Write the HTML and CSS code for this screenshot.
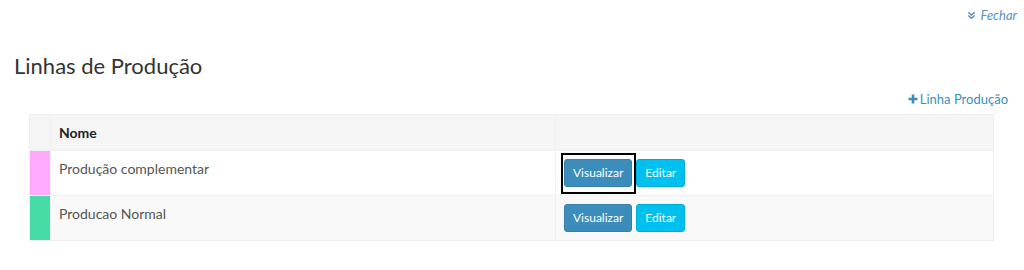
FILE: index.html
```html
<!DOCTYPE html>
<html lang="pt">
<head>
  <meta charset="UTF-8">
  <title>Linhas de Produção</title>
  <link rel="stylesheet" href="styles.css">
</head>
<body>
  <div class="topbar">
    <a class="close-link" href="#">
      <svg class="chev" viewBox="0 0 10 10" width="9" height="9"><path d="M1.5 1.5 L5 4.5 L8.5 1.5 M1.5 5 L5 8 L8.5 5" fill="none" stroke="currentColor" stroke-width="1.6"/></svg>
      Fechar
    </a>
  </div>

  <h3 class="page-title">Linhas de Produção</h3>

  <div class="box">
    <div class="box-tools">
      <a class="add-link" href="#">
        <svg viewBox="0 0 10 10" width="10" height="10"><path d="M5 0.5 V9.5 M0.5 5 H9.5" stroke="currentColor" stroke-width="2.6"/></svg>
        Linha Produção
      </a>
    </div>

    <table class="table">
      <thead>
        <tr>
          <th class="swatch"></th>
          <th class="name">Nome</th>
          <th></th>
        </tr>
      </thead>
      <tbody>
        <tr>
          <td class="swatch" style="background:#ffaaff"></td>
          <td class="name">Produção complementar</td>
          <td>
            <div class="actions">
              <span class="focused"><button class="btn btn-primary">Visualizar</button></span>
              <button class="btn btn-info">Editar</button>
            </div>
          </td>
        </tr>
        <tr>
          <td class="swatch" style="background:#47dba6"></td>
          <td class="name">Producao Normal</td>
          <td>
            <div class="actions">
              <button class="btn btn-primary">Visualizar</button>
              <button class="btn btn-info">Editar</button>
            </div>
          </td>
        </tr>
      </tbody>
    </table>
  </div>
</body>
</html>
```

FILE: styles.css
```css
body {
  margin: 0;
  font-family: Lato, "Open Sans", sans-serif;
  font-size: 14px;
  color: #333;
  background: #fff;
}

a {
  text-decoration: none;
}

.topbar {
  display: flex;
  justify-content: flex-end;
  padding: 7px 7px 0 0;
}

.close-link {
  color: #5a8fc4;
  font-style: italic;
  font-size: 13px;
  display: flex;
  align-items: center;
  gap: 5px;
}

.page-title {
  margin: 30px 0 0 14px;
  font-size: 22px;
  font-weight: 400;
  line-height: 1.15;
}

.box {
  padding: 0 30px 0 29px;
}

.box-tools {
  display: flex;
  justify-content: flex-end;
  margin: 13px -14px 7px 0;
}

.add-link {
  color: #3c8dbc;
  font-size: 13px;
  display: flex;
  align-items: center;
  gap: 2px;
}

.table {
  width: 100%;
  border-collapse: collapse;
  border: 1px solid #eeeeee;
}

.table th,
.table td {
  padding: 8px;
  line-height: 20px;
  text-align: left;
  vertical-align: top;
  border-top: 1px solid #f0f0f0;
}

.table th {
  padding: 8px 8px 7px;
  background: #f5f5f5;
  font-weight: 700;
  border-bottom: 1px solid #f0f0f0;
}

.table th + th,
.table td + td {
  border-left: 1px solid #f0f0f0;
}

.table .swatch {
  width: 20px;
  padding: 0;
  border-left: none;
}

.table .name {
  width: 488px;
}

.table th.name {
  color: #222;
}

.table td.name {
  color: #555;
}

.table tbody tr:nth-child(even) {
  background: #f9f9f9;
}

.actions {
  display: flex;
  gap: 4px;
}

.btn {
  font-family: inherit;
  font-size: 12px;
  line-height: 18px;
  padding: 4px 8px;
  border: 1px solid transparent;
  border-radius: 3px;
  color: #fff;
  cursor: pointer;
}

.btn-primary {
  background: #3c8dbc;
  border-color: #367fa9;
}

.btn-info {
  background: #00c0ef;
  border-color: #00acd6;
}

.focused {
  position: relative;
  display: flex;
}

.focused::after {
  content: "";
  position: absolute;
  left: -3px;
  right: -4px;
  top: -6px;
  bottom: -7px;
  border: 2px solid #000;
}
```
